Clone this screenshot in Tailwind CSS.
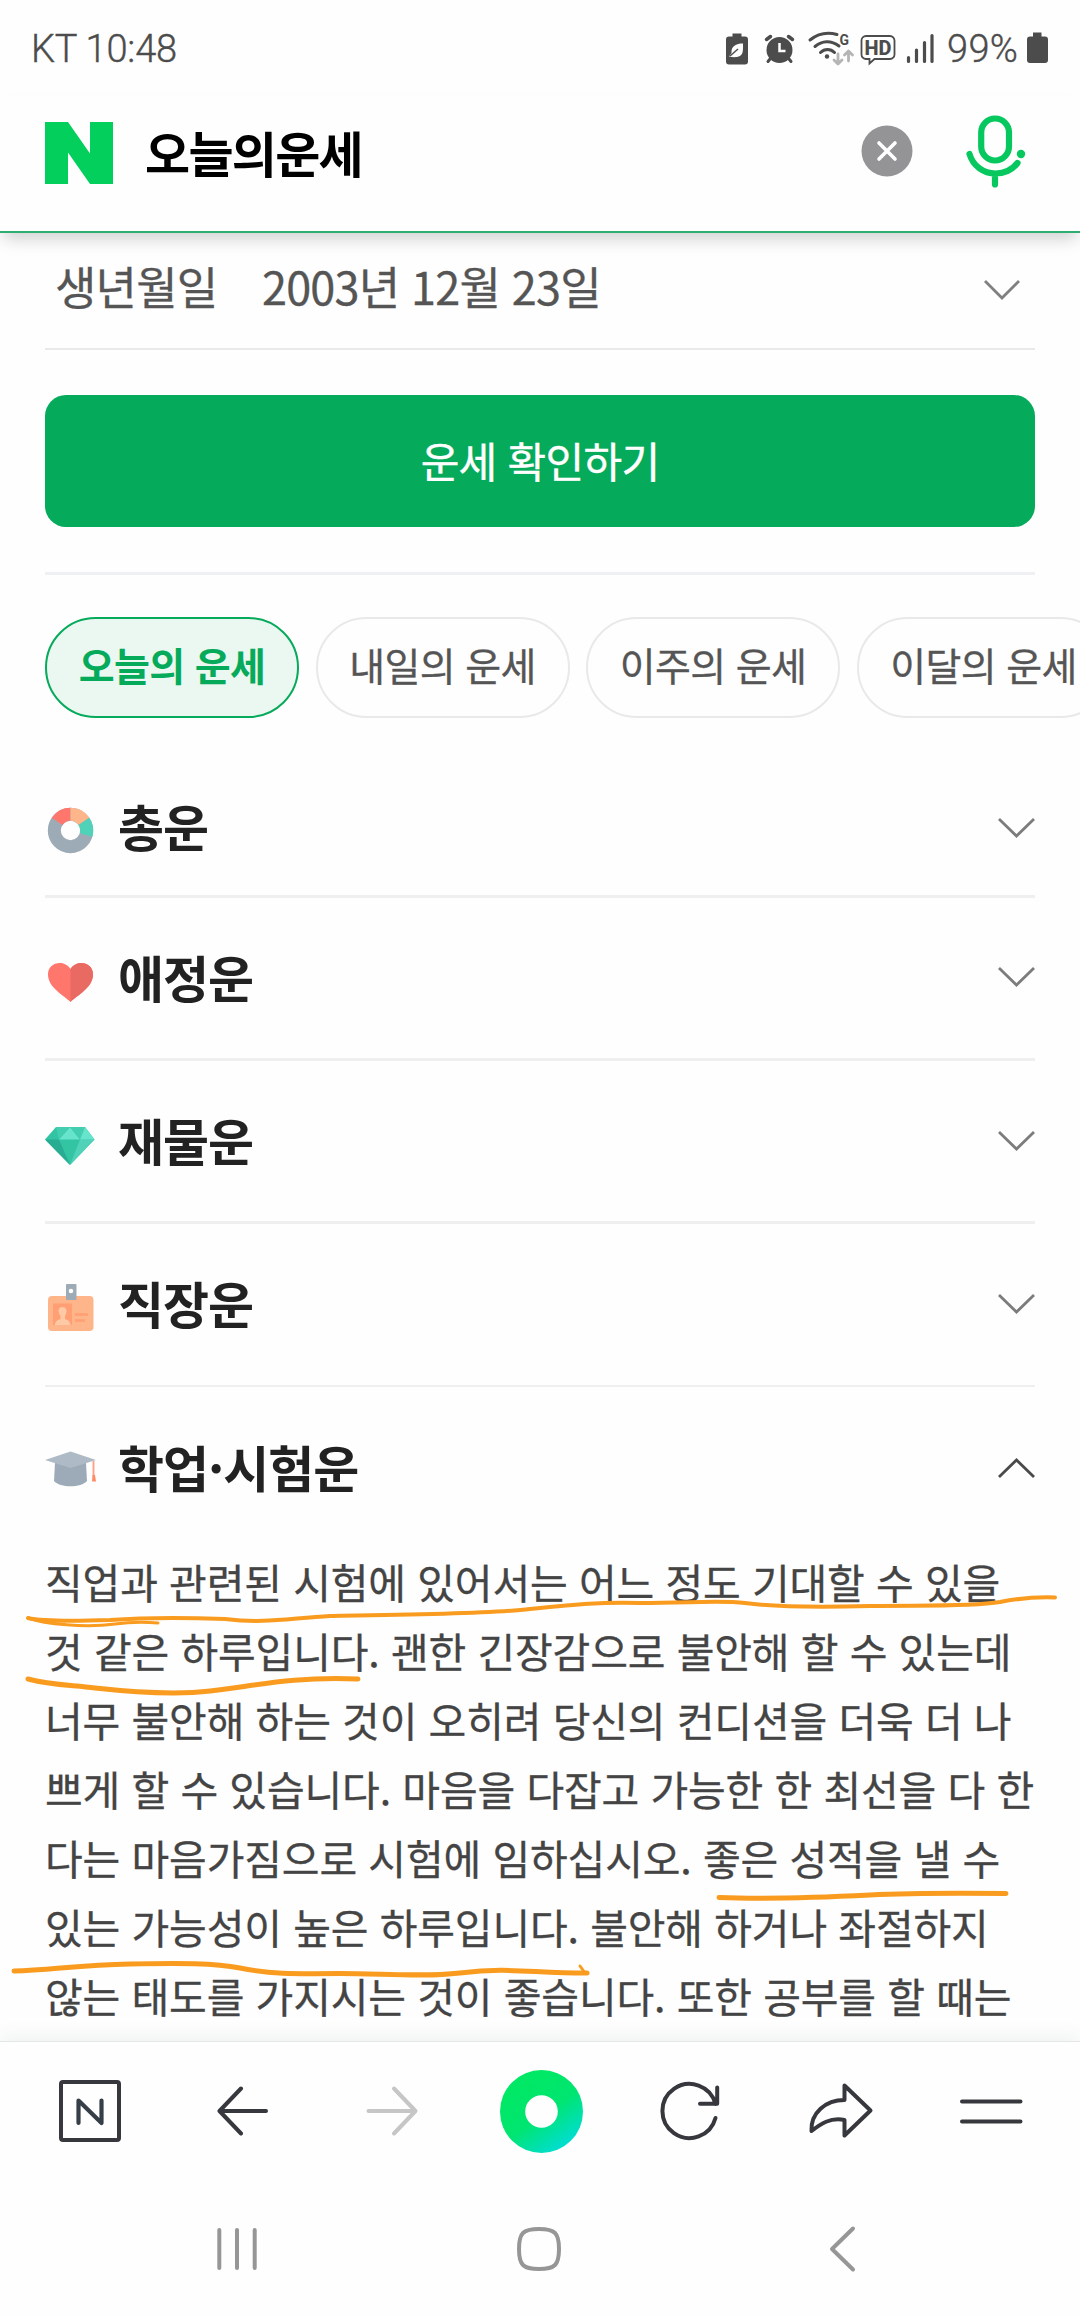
<!DOCTYPE html>
<html lang="ko">
<head>
<meta charset="utf-8">
<title>오늘의운세</title>
<script src="https://cdn.jsdelivr.net/npm/@tailwindcss/browser@4"></script>
</head>
<body class="bg-[#fefefe]">
<div class="relative flex flex-col w-[1080px] h-[2316px] overflow-hidden bg-[#fefefe] font-['Noto_Sans_CJK_KR',sans-serif]">

  <!-- status bar -->
  <div class="flex items-center justify-between h-[96px] shrink-0 pl-[31px] pr-[32px] text-[#4c4c4c] [-webkit-text-stroke:0.4px]">
    <span class="pt-[2px] font-[Roboto] font-light text-[38px] leading-none whitespace-pre tracking-[-0.2px]">KT 10:48</span>
    <div class="flex items-center">
      <svg class="w-[222px] h-[96px] [-webkit-text-stroke:0]" viewBox="722 0 222 96" fill="none" stroke="#4c4c4c">
        <path d="M732.5 33.5h9v3h3.500a3 3 0 0 1 3 3v22a3 3 0 0 1-3 3h-16a3 3 0 0 1-3-3v-22a3 3 0 0 1 3-3h3.500z" fill="#4c4c4c" stroke="none"/>
        <path d="M743 43.500c-7 0-12 2.500-11.500 9.500l-2.500 3.500c5 1 12 1.500 13.500-4 .8-3 .5-6 .5-9z" fill="#fefefe" stroke="none"/>
        <path d="M730 56l8-7" stroke-width="1.500"/>
        <circle cx="779.5" cy="50" r="13" fill="#4c4c4c" stroke="none"/>
        <path d="M766.500 39.500l4-3M792.500 39.500l-4-3" stroke-width="3.500" stroke-linecap="round"/>
        <path d="M770 59l-2 2.500M789 59l2 2.500" stroke-width="3" stroke-linecap="round"/>
        <path d="M779.500 43v8h6" stroke="#fefefe" stroke-width="2.500"/>
        <path d="M810 40c8-6.500 18-8 27-5.500M815 46.500c7-6 16-6.500 24-.500M820.500 52.500c4-4 10-4 14 0" stroke-width="3" stroke-linecap="round"/>
        <circle cx="827" cy="56.500" r="2.200" fill="#4c4c4c" stroke="none"/>
        <path d="M838 54v9.500M834 60l4 4 4-4M848.500 61v-9.500M844.500 55l4-4 4 4" stroke="#b5b5b5" stroke-width="2.800" stroke-linecap="round" stroke-linejoin="round"/>
        <text x="839.500" y="45" font-family="Roboto" font-size="15" font-weight="700" fill="#4c4c4c" stroke="none" textLength="9.500" lengthAdjust="spacingAndGlyphs">G</text>
        <path d="M866 36h24a4.500 4.500 0 0 1 4.500 4.500v14a4.500 4.500 0 0 1-4.500 4.500h-15.500l-5 4.500v-4.500h-3.500a4.500 4.500 0 0 1-4.500-4.500v-14a4.500 4.500 0 0 1 4.500-4.500z" stroke-width="1.800"/>
        <text x="864.500" y="54.500" font-family="Roboto" font-size="19.500" font-weight="800" fill="#4c4c4c" stroke="none" textLength="27" lengthAdjust="spacingAndGlyphs">HD</text>
        <path d="M908.500 57.500v4M916.500 50v11.500M924.500 42.500v19M932 35.500v26" stroke-width="3.200" stroke-linecap="round"/>
      </svg>
      <span class="pt-[2px] font-[Roboto] font-light text-[38px] leading-none w-[78px] pl-[3px] tracking-[0.3px]">99%</span>
      <svg class="w-[26px] h-[96px]" viewBox="1022 0 26 96"><path d="M1033 32.500h8.500v4h3.500a3 3 0 0 1 3 3v20.500a3 3 0 0 1-3 3h-15a3 3 0 0 1-3-3v-20.500a3 3 0 0 1 3-3h3z" fill="#4c4c4c"/></svg>
    </div>
  </div>

  <!-- search header -->
  <header class="relative z-10 flex items-center h-[137px] shrink-0 pl-[45px] pr-[52px] pb-[25px] bg-[#fefefe] border-b-2 border-[#2fae70] shadow-[0_10px_16px_-4px_rgba(0,0,0,0.18)]">
    <svg class="relative top-[2px] w-[68px] h-[62px]" viewBox="0 0 68 62"><path d="M0 0h23l22 31.500V0h23v62H45L23 30.500V62H0z" fill="#03cf5d"/></svg>
    <h1 class="ml-[32px] text-[49px] leading-none font-bold text-black tracking-[-1.7px] whitespace-nowrap">오늘의운세</h1>
    <svg class="ml-auto w-[52px] h-[52px]" viewBox="0 0 52 52"><circle cx="26" cy="26" r="25.500" fill="#949496"/><path d="M18 18l16 16M34 18L18 34" stroke="#fff" stroke-width="3.600" stroke-linecap="round"/></svg>
    <svg class="ml-[51px] w-[64px] h-[76px]" viewBox="964 114 64 76" fill="none" stroke="#06c85f" stroke-width="6.200" stroke-linecap="round">
      <rect x="981.200" y="119.500" width="27.800" height="42" rx="13.900"/>
      <path d="M969.500 155c3.500 12 14 19.500 26 19.500 9 0 17-4 22-10.500M995 175v10.500"/>
      <circle cx="1021" cy="155" r="4.200" fill="#06c85f" stroke="none"/>
    </svg>
  </header>

  <!-- page content -->
  <main class="flex flex-col h-[1808px] shrink-0 px-[45px]">
    <div class="flex items-center h-[117px] shrink-0 pl-[10px] pr-[15px] pb-[10px] border-b-2 border-[#e9e9e9] text-[45px] leading-none text-[#555] tracking-[-0.8px] whitespace-pre [-webkit-text-stroke:0.3px]">
      <span class="w-[207px]">생년월일</span><span>2003년 12월 23일</span>
      <svg class="relative top-[4px] ml-auto w-[36px] h-[22px]" viewBox="0 0 36 22" fill="none" stroke="#808080" stroke-width="2.800"><path d="M1 2l17 17L35 2"/></svg>
    </div>
    <button class="mt-[45px] h-[132px] shrink-0 rounded-[21px] bg-[#06aa5b] pb-[2px] text-[42px] leading-none text-white tracking-[-0.7px] [-webkit-text-stroke:0.4px]">운세 확인하기</button>
    <div class="mt-[45px] h-[3px] shrink-0 bg-[#eff0f3]"></div>
    <div class="flex gap-[16.5px] mt-[42px] shrink-0 text-[39px] leading-none text-[#555] tracking-[-0.6px] whitespace-nowrap">
      <div class="flex items-center justify-center w-[254px] h-[101px] pb-[6px] shrink-0 rounded-full border-2 border-[#06aa5b] bg-[#ebf7f1] font-bold text-[#06aa5b]">오늘의 운세</div>
      <div class="flex items-center justify-center w-[254px] h-[101px] pb-[6px] shrink-0 rounded-full border-2 border-[#e9e9e9] [-webkit-text-stroke:0.3px]">내일의 운세</div>
      <div class="flex items-center justify-center w-[254px] h-[101px] pb-[6px] shrink-0 rounded-full border-2 border-[#e9e9e9] [-webkit-text-stroke:0.3px]">이주의 운세</div>
      <div class="flex items-center justify-center w-[254px] h-[101px] pb-[6px] shrink-0 rounded-full border-2 border-[#e9e9e9] [-webkit-text-stroke:0.3px]">이달의 운세</div>
    </div>

    <section class="flex flex-col shrink-0 mt-[14px] text-[50px] leading-none font-bold text-[#222] tracking-[-1px]">
      <div class="flex items-center h-[166px] pt-[28px] border-b-3 border-[#efefef]">
        <svg class="w-[52px] h-[52px] mr-[21px]" viewBox="0 0 52 52" fill="none" stroke-width="13">
          <g transform="translate(25.500 28.500)"><circle r="16.200" stroke="#9dabb7"/><path d="M-13.400 -9.100A16.200 16.200 0 0 1 0 -16.200" stroke="#ff766d"/><path d="M0 -16.200A16.200 16.200 0 0 1 13.400 -9.100" stroke="#ffb58a"/><path d="M13.400 -9.100A16.200 16.200 0 0 1 15.600 4.400" stroke="#50d2b8"/></g>
        </svg>
        <h2 class="pb-[5px]">총운</h2>
        <svg class="ml-auto w-[38px] h-[22px]" viewBox="0 0 38 22" fill="none" stroke="#7c7c7c" stroke-width="2.800"><path d="M2 2l17.500 17L37 2"/></svg>
      </div>
      <div class="flex items-center h-[163px] border-b-3 border-[#efefef]">
        <svg class="w-[52px] h-[52px] mt-[3px] mr-[21px]" viewBox="0 0 52 52"><path d="M25.500 48C20 42 3 34 3 20.500 3 8 19 5 25.500 15 32 5 48 8 48 20.500 48 34 31 42 25.500 48z" fill="#ff766d"/><path d="M25.500 48V15C32 5 48 8 48 20.500 48 34 31 42 25.500 48z" fill="#e96a63"/></svg>
        <h2 class="pb-[5px]">애정운</h2>
        <svg class="ml-auto mb-[2px] w-[38px] h-[22px]" viewBox="0 0 38 22" fill="none" stroke="#7c7c7c" stroke-width="2.800"><path d="M2 2l17.500 17L37 2"/></svg>
      </div>
      <div class="flex items-center h-[163px] border-b-3 border-[#efefef]">
        <svg class="w-[52px] h-[52px] mt-[5px] mr-[21px]" viewBox="0 0 52 52"><path d="M11 9h29l9.500 12.500L25 47 0 21.500z" fill="#32c4a3"/><path d="M0 21.500h14L25 47z" fill="#27ad91"/><path d="M35 21.500h14.500L25 47z" fill="#50d2b8"/><path d="M14 21.500L25 9l10 12.500z" fill="#66e4cc"/><path d="M11 9h14L14 21.500z" fill="#43cdb1"/><path d="M25 9h15l-5 12.500z" fill="#43cdb1"/><path d="M40 9l9.500 12.500H35z" fill="#66e4cc"/></svg>
        <h2 class="pb-[5px]">재물운</h2>
        <svg class="ml-auto w-[38px] h-[22px]" viewBox="0 0 38 22" fill="none" stroke="#7c7c7c" stroke-width="2.800"><path d="M2 2l17.500 17L37 2"/></svg>
      </div>
      <div class="flex items-center h-[163px] border-b-2 border-[#efefef]">
        <svg class="w-[52px] h-[52px] mt-[6px] mr-[21px]" viewBox="0 0 52 52"><rect x="3" y="14" width="45.500" height="35" rx="4" fill="#ffb58a"/><rect x="8" y="21.500" width="19" height="21.500" fill="#ff9f73"/><path d="M10 43c0-4 3-5 5.500-6v-3c-4-6-1-9 2-9s6 3 2.500 9v3c3 1 5 2 5.500 6z" fill="#ffc9a5"/><path d="M30 32.500h13M30 38.500h10" stroke="#ff9f73" stroke-width="2.500"/><rect x="21" y="2" width="10.500" height="16" rx="1" fill="#9dabb7"/><circle cx="26" cy="9" r="2.300" fill="#fff"/></svg>
        <h2 class="pb-[5px]">직장운</h2>
        <svg class="ml-auto mb-[2px] w-[38px] h-[22px]" viewBox="0 0 38 22" fill="none" stroke="#7c7c7c" stroke-width="2.800"><path d="M2 2l17.500 17L37 2"/></svg>
      </div>
      <div class="flex items-center h-[163px]">
        <svg class="w-[52px] h-[52px] mr-[21px]" viewBox="0 0 52 52"><path d="M10 20h31l1 18c-6 7-27 7-33 0z" fill="#9dabb9"/><path d="M0 17L25.500 8.500 51 17 25.500 25z" fill="#aebbc6"/><path d="M48.500 18v15" stroke="#ff9f7e" stroke-width="1.800"/><path d="M47.500 32h2.500l1 6.500h-4z" fill="#ff8a66"/></svg>
        <h2 class="pb-[5px]">학업·시험운</h2>
        <svg class="ml-auto mb-[2px] w-[38px] h-[22px]" viewBox="0 0 38 22" fill="none" stroke="#4a4a4a" stroke-width="2.800"><path d="M2 20L19.500 3 37 20"/></svg>
      </div>
    </section>

    <p class="-mt-[3px] text-[41px] leading-[69px] text-[#444] tracking-[-0.14px] whitespace-nowrap [-webkit-text-stroke:0.3px]">직업과 관련된 시험에 있어서는 어느 정도 기대할 수 있을<br>것 같은 하루입니다. 괜한 긴장감으로 불안해 할 수 있는데<br>너무 불안해 하는 것이 오히려 당신의 컨디션을 더욱 더 나<br>쁘게 할 수 있습니다. 마음을 다잡고 가능한 한 최선을 다 한<br>다는 마음가짐으로 시험에 임하십시오. 좋은 성적을 낼 수<br>있는 가능성이 높은 하루입니다. 불안해 하거나 좌절하지<br>않는 태도를 가지시는 것이 좋습니다. 또한 공부를 할 때는</p>
  </main>

  <!-- hand-drawn highlights over the text -->
  <svg class="absolute left-0 top-[1580px] w-[1080px] h-[420px]" viewBox="0 1580 1080 420" fill="none" stroke="#f99b1f" stroke-width="4" stroke-linecap="round" stroke-linejoin="round">
    <path d="M28 1618C45 1622 80 1621 110 1620C150 1617 200 1618 225 1619C265 1624 290 1618 330 1616C400 1615 490 1614 530 1609C580 1604 600 1602 640 1603C690 1603 720 1600 745 1603C780 1608 830 1607 870 1606C920 1605 970 1607 1000 1602C1020 1598 1040 1597 1055 1597.500"/>
    <path d="M28 1618C45 1624 85 1628 115 1624C130 1622 145 1622 158 1623" stroke-width="3"/>
    <path d="M28 1679C50 1685 70 1685 95 1688C150 1694 185 1694 210 1691C250 1687 290 1676 358 1679" stroke-width="5"/>
    <path d="M719 1897.500C760 1899 830 1897 870 1895C910 1893 960 1893 1006 1893.500" stroke-width="5"/>
    <path d="M14 1971C50 1970 80 1965 130 1964C180 1963 215 1963 240 1968C270 1974 290 1974 340 1973.500C390 1974 425 1977 460 1973C510 1967 530 1973 587 1973" stroke-width="5"/>
    <path d="M580 1966l5 7" stroke-width="3"/>
  </svg>

  <!-- browser toolbar -->
  <div class="relative h-[275px] shrink-0 border-t border-[#e4e6e8] bg-[#fefefe] shadow-[0_-6px_16px_rgba(60,80,90,0.07)]">
    <svg class="block w-[1080px] h-[274px]" viewBox="0 2042 1080 274" fill="none" stroke="#36383d" stroke-width="4" stroke-linecap="round" stroke-linejoin="round">
      <defs><linearGradient id="g" x1="0.300" y1="0.150" x2="0.850" y2="0.950"><stop offset="0" stop-color="#00e865"/><stop offset=".45" stop-color="#00e570"/><stop offset="1" stop-color="#00dce0"/></linearGradient></defs>
      <rect x="61" y="2082" width="58" height="58" rx="2"/>
      <path d="M78.500 2123v-22.500l23 22.500v-22.500" stroke="#363f47" stroke-width="4.200"/>
      <path d="M266 2111h-46M241 2088.500L219.500 2111l21.500 22.500"/>
      <path d="M368.500 2111h46M394 2088.500l21.500 22.500-21.500 22.500" stroke="#c6c6c6"/>
      <circle cx="541.500" cy="2111.500" r="41.500" fill="url(#g)" stroke="none"/>
      <circle cx="541.500" cy="2111.500" r="16.300" fill="#fefefe" stroke="none"/>
      <path d="M715.500 2118a27 27 0 1 1 0-14M717.200 2087.500v16.200h-17.200"/>
      <path d="M844.500 2085.500L870.500 2110.500l-26 25v-15.500c-14-3-24 4-33 11-1-18 14-31 33-31z"/>
      <path d="M962 2101.500h58.500M962 2121.500h58.500"/>
      <g stroke="#969696"><path d="M219.300 2230v38M237 2230v38M254.700 2230v38"/><path d="M539 2229c16 0 20 4 20 20s-4 20-20 20-20-4-20-20 4-20 20-20z" /><path d="M853 2228.500L832 2249l21 20.500"/></g>
    </svg>
  </div>
</div>
</body>
</html>
